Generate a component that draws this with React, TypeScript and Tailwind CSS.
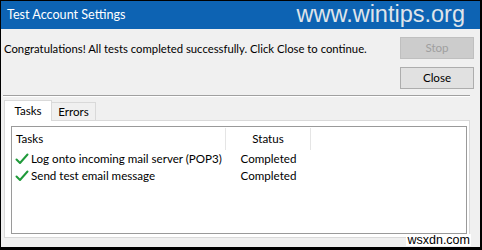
import React from "react";

function Check() {
  return (
    <svg width="14" height="12" viewBox="0 0 14 12" className="shrink-0">
      <polyline points="1.5,6.5 5,10 12.5,1.5" fill="none" stroke="#1f9a3a" strokeWidth="2" strokeLinecap="round" strokeLinejoin="round" />
    </svg>
  );
}

export default function App() {
  return (
    <div className="relative flex flex-col w-[482px] h-[250px] border-black border-l border-t border-r-2 border-b-[3px] bg-[#f0f0f0] font-['Lato',sans-serif] text-[11.6px] text-black overflow-hidden whitespace-nowrap">
      <div className="h-[28px] shrink-0 bg-[#0d63b3] flex items-center justify-between pl-[6px] pr-[15px]">
        <span className="text-white text-[12.6px]">Test Account Settings</span>
        <span className="text-[#dfe4ea] text-[23.5px] leading-none font-['Liberation_Sans',sans-serif]">www.wintips.org</span>
      </div>
      <div className="flex pl-[3px] pr-[6px] pt-[8px]">
        <div className="flex-1 pt-[2px] h-[22px] flex items-center text-[11.3px]">Congratulations! All tests completed successfully. Click Close to continue.</div>
        <div className="flex flex-col gap-[8px] w-[74px]">
          <div className="h-[22px] bg-[#cccccc] border border-[#bfbfbf] text-[#9f9f9f] flex items-center justify-center">Stop</div>
          <div className="h-[22px] bg-[#e1e1e1] border border-[#adadad] flex items-center justify-center">Close</div>
        </div>
      </div>
      <div className="ml-[2px] mr-[10px] mt-[6px] border-t border-[#a0a0a0] border-b border-b-white" />
      <div className="flex-1 flex flex-col pl-[3px] pr-[10px] pt-[3px] pb-[9px]">
        <div className="flex items-end h-[21px]">
          <div className="relative z-10 h-[21px] w-[48px] bg-white border border-b-0 border-[#d9d9d9] flex items-center justify-center pb-[1px]">Tasks</div>
          <div className="h-[19px] w-[44px] border border-l-0 border-b-0 border-[#d9d9d9] flex items-center justify-center">Errors</div>
        </div>
        <div className="flex-1 -mt-px bg-white border border-[#d9d9d9] pl-[6px] pr-[2px] pt-[5px] pb-[3px] flex">
          <div className="flex-1 border border-[#9a9a9a] bg-white flex flex-col">
            <div className="flex h-[23px] items-stretch pt-[1px]">
              <div className="w-[214px] pl-[4px] flex items-center border-r border-[#e5e5e5]">Tasks</div>
              <div className="w-[85px] flex items-center justify-center border-r border-[#e5e5e5]">Status</div>
            </div>
            <div className="flex h-[17px] items-center">
              <div className="w-[214px] pl-[3px] flex items-center gap-[2px]"><Check /><span>Log onto incoming mail server (POP3)</span></div>
              <div className="w-[85px] text-center">Completed</div>
            </div>
            <div className="flex h-[17px] items-center">
              <div className="w-[214px] pl-[3px] flex items-center gap-[2px]"><Check /><span>Send test email message</span></div>
              <div className="w-[85px] text-center">Completed</div>
            </div>
          </div>
        </div>
      </div>
      <div className="absolute right-[9px] bottom-[1px] px-[1px] leading-none bg-white text-[12.5px] font-['Liberation_Sans',sans-serif] text-black">wsxdn.com</div>
    </div>
  );
}
